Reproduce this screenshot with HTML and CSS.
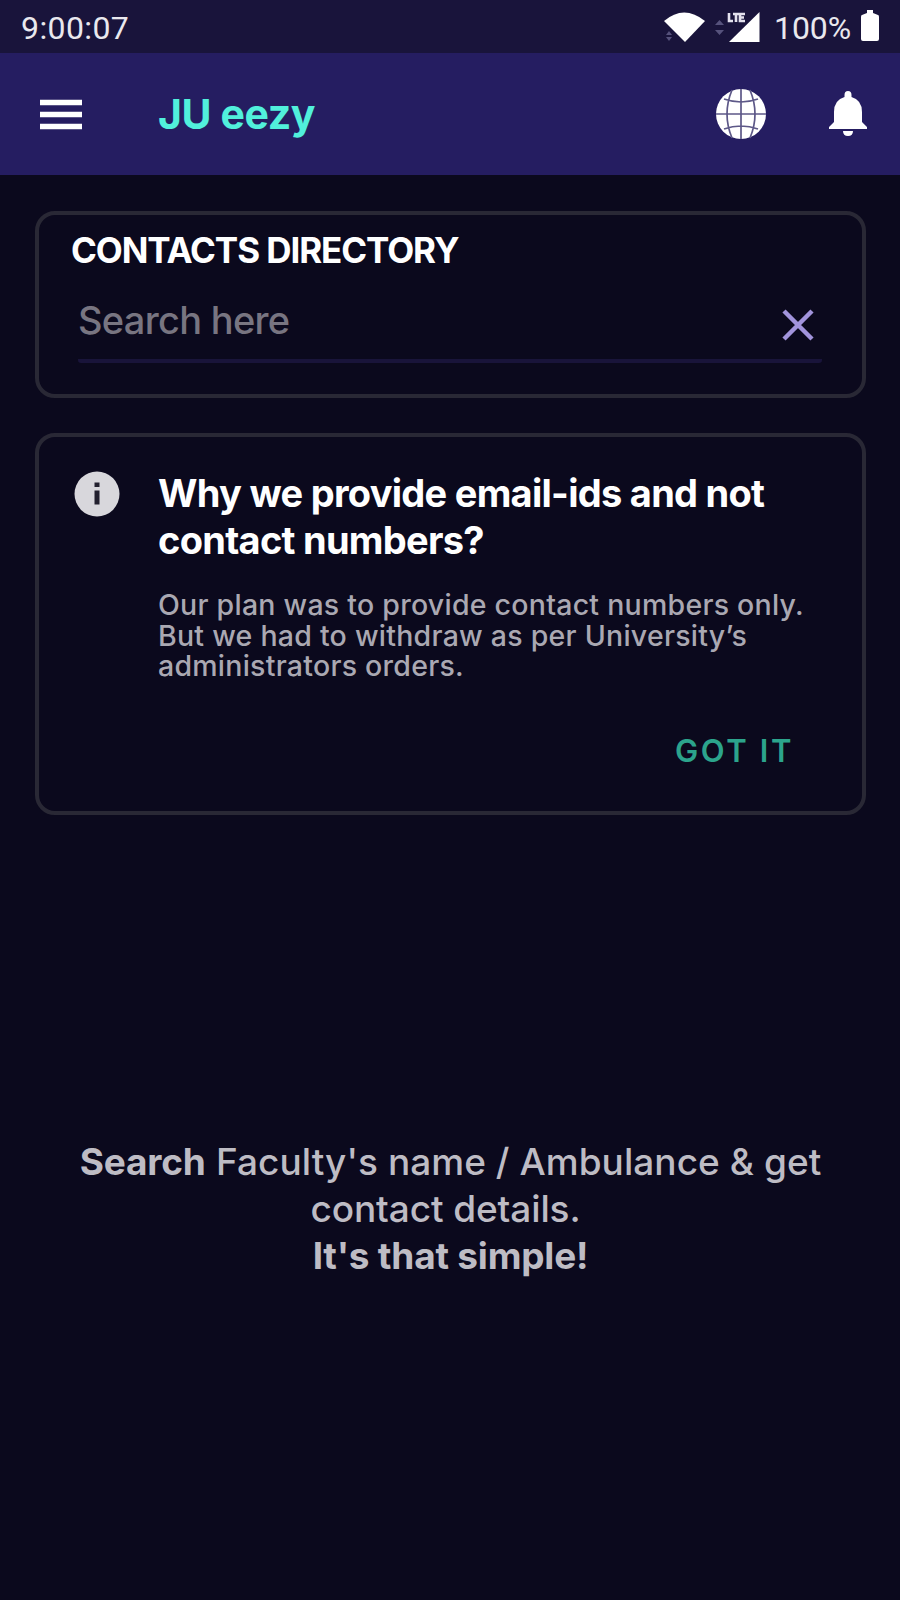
FILE: index.html
```html
<!DOCTYPE html>
<html lang="en">
<head>
<meta charset="utf-8">
<title>JU eezy</title>
<link rel="stylesheet" href="styles.css">
</head>
<body>
<div class="status">
  <span class="clock">9:00:07</span>
  <div class="status-right">
    <svg class="signals" width="100" height="36" viewBox="660 8 100 36">
      <path d="M662 21Q682 4 703 21L683 42Z" fill="#fff"/>
      <path d="M664 35l3-4 3 4zM664 37h6l-3 4z" fill="#56527c"/>
      <path d="M713 25l4.500-5 4.500 5zM713 30h9l-4.500 5z" fill="#56527c"/>
      <path d="M757.500 12V42H727Z" fill="#fff"/>
      <path d="M727 13V21H731M731 14H737M734 14V22M743 14H738V21H743M738 17.500H742" fill="none" stroke="#e4e2ee" stroke-width="2.600"/>
    </svg>
    <span class="percent">100%</span>
    <svg class="battery" width="20" height="32" viewBox="0 0 20 32"><path d="M7 0h6v3l5 2q1 0 1 2v22q0 2-2 2H3q-2 0-2-2V7q0-2 1-2l5-2z" fill="#fff"/></svg>
  </div>
</div>
<header class="appbar">
  <svg class="menu" width="44" height="32" viewBox="0 0 44 32"><path d="M1 4.500H43M1 16.500H43M1 28.500H43" stroke="#fff" stroke-width="5.500"/></svg>
  <h1 class="brand">JU eezy</h1>
  <svg class="globe" width="52" height="52" viewBox="0 0 52 52">
    <circle cx="26" cy="26" r="25" fill="#fff"/>
    <path d="M26 1V51M1 26H51M9 11Q26 17 43 11M9 41Q26 35 43 41M17 2Q7 26 17 50M35 2Q45 26 35 50" fill="none" stroke="#5d5888" stroke-width="1.700"/>
  </svg>
  <svg class="bell" width="40" height="46" viewBox="0 0 40 46"><path d="M20 0q3.500 0 3.500 4v2Q34 9 34 21V31L39 36V38H1V36L6 31V21Q6 9 16.500 6V4Q16.500 0 20 0ZM15 40H25Q25 45 20 45T15 40Z" fill="#fff"/></svg>
</header>
<main class="content">
  <section class="card search">
    <h2 class="search-title">CONTACTS DIRECTORY</h2>
    <div class="field">
      <span class="placeholder">Search here</span>
      <svg class="clear" width="32" height="32" viewBox="0 0 32 32"><path d="M2 2L30 30M30 2L2 30" stroke="#a294dc" stroke-width="4.500"/></svg>
    </div>
  </section>
  <section class="card notice">
    <svg class="info" width="46" height="46" viewBox="0 0 46 46"><circle cx="23" cy="23" r="22.500" fill="#d8d7dc"/><path d="M20.500 11.500h5v4.500h-5zM20.500 19.500h5v14h-5z" fill="#22202f"/></svg>
    <div class="notice-body">
      <h3 class="heading">Why we provide email-ids and not<br>contact numbers?</h3>
      <p class="text">Our plan was to provide contact numbers only.<br>But we had to withdraw as per University’s<br>administrators orders.</p>
      <div class="actions"><span class="got">GOT IT</span></div>
    </div>
  </section>
  <p class="hint"><b>Search</b> <span class="lead">Faculty's name / Ambulance &amp; get</span><br><span class="detail">contact details.</span><br><b class="simple">It's that simple!</b></p>
</main>
</body>
</html>
```
FILE: styles.css
```css
* { box-sizing: border-box; }
body { margin: 0; width: 900px; height: 1600px; background: #0b091d; color: #fff; font-family: Inter, "Liberation Sans", sans-serif; overflow: hidden; }
h1, h2, h3, p { margin: 0; }
svg { display: block; flex: none; }
.status { height: 53px; background: #19143b; display: flex; justify-content: space-between; padding: 0 20px 0 21px; font-family: Roboto, sans-serif; font-size: 32px; line-height: 56px; color: #e9e8ee; }
.clock { letter-spacing: 0.4px; }
.status-right { display: flex; align-items: flex-start; }
.signals { margin-top: 8px; }
.percent { margin-left: 12px; letter-spacing: -0.1px; }
.battery { margin: 10px 0 0 9px; }
.appbar { height: 122px; background: #251d61; display: flex; align-items: center; padding: 0 32px 0 39px; }
.menu { margin-top: -1px; }
.brand { flex: 1; margin-left: 75px; font-size: 41px; font-weight: 700; line-height: 50px; letter-spacing: -0.4px; color: #51f0dc; }
.globe { margin-right: 61px; }
.content { padding: 36px 34px 0 35px; }
.card { border: 4px solid #292835; border-radius: 20px; }
.search { height: 187px; padding: 14px 40px 0 32px; }
.search-title { font-size: 35px; line-height: 42px; font-weight: 700; letter-spacing: -1.08px; }
.field { display: flex; justify-content: space-between; margin-left: 7px; height: 92px; border-bottom: 4px solid #19143a; padding: 25px 8px 0 0; border-radius: 0 0 3px 3px; }
.placeholder { font-size: 38px; font-weight: 500; line-height: 48px; letter-spacing: -0.7px; color: #787581; }
.clear { margin-top: 13px; }
.notice { margin-top: 35px; height: 382px; padding: 34px 0 0 35px; display: flex; }
.notice-body { flex: 1; margin-left: 38px; }
.heading { margin-top: -1px; font-size: 38px; line-height: 47px; font-weight: 700; letter-spacing: -0.72px; white-space: nowrap; }
.text { margin-top: 26px; font-size: 28.5px; line-height: 30.6px; font-weight: 500; letter-spacing: 0.25px; color: #aaa8b2; white-space: nowrap; }
.actions { display: flex; justify-content: flex-end; padding: 49px 68px 0 0; }
.got { font-size: 31px; line-height: 40px; font-weight: 600; letter-spacing: 2.6px; color: #2ca48c; }
.hint { margin-top: 323px; text-align: center; font-size: 37px; line-height: 47px; color: #bebcc4; white-space: nowrap; }
.hint b { letter-spacing: -0.2px; }
.lead { font-weight: 500; letter-spacing: 0.05px; }
.detail { font-weight: 500; letter-spacing: -0.1px; padding-right: 10px; }
```
